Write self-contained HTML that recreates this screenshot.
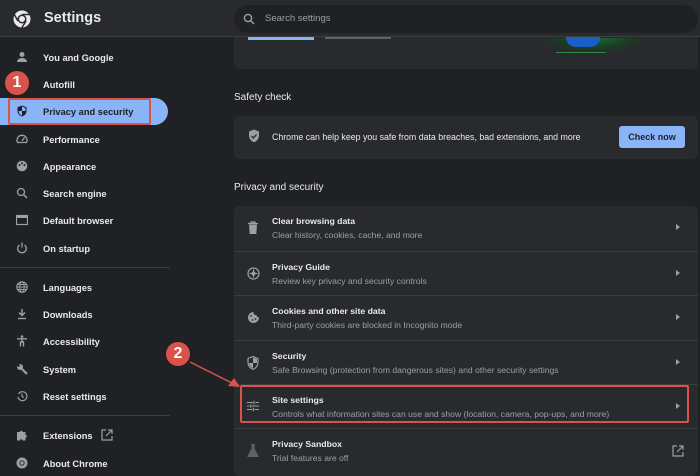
<!DOCTYPE html>
<html><head><style>
*{margin:0;padding:0;box-sizing:border-box}
body{width:700px;height:472px;overflow:hidden;background:#202124;font-family:"Liberation Sans",sans-serif;color:#e8eaed;position:relative}
.hdr{position:absolute;left:0;top:0;width:700px;height:37px;background:#292a2d;border-bottom:1px solid #3c3d40;z-index:5}
.title{position:absolute;left:44px;top:10px;font-size:14.5px;font-weight:bold;color:#e8eaed}
.search{position:absolute;left:234px;top:5px;width:464px;height:28px;border-radius:14px;background:#202124}
.search span{position:absolute;left:31px;top:8px;font-size:9.5px;color:#9aa0a6}
.nav{position:absolute;left:0;font-size:9.3px;font-weight:bold;color:#e8eaed}
.nav .ic{position:absolute;left:16px;top:-2px;width:12px;height:12px}
.nav .t{position:absolute;left:43px;top:0px;white-space:nowrap}
.sel{position:absolute;left:0;top:98px;width:168px;height:27px;background:#8ab4f8;border-radius:0 14px 14px 0}
.div{position:absolute;left:0;width:170px;height:1px;background:#3c3d40}
.card{position:absolute;left:234px;width:464px;background:#292a2d;border-radius:6px}
.h{position:absolute;left:234px;font-size:10px;color:#e8eaed}
.row{position:absolute;left:234px;width:464px;height:44px;border-top:1px solid #3c3d40}
.row .a{position:absolute;left:38px;top:10px;font-size:8.7px;font-weight:bold;color:#e8eaed}
.row .b{position:absolute;left:38px;top:24px;font-size:8.6px;color:#9aa0a6;white-space:nowrap}
.row .arr{position:absolute;left:442px;top:18px;width:0;height:0;border-left:4px solid #9aa0a6;border-top:3px solid transparent;border-bottom:3px solid transparent}
.row svg{position:absolute;left:13px;top:15px}
.badge{position:absolute;width:24px;height:24px;border-radius:50%;background:#d9534a;color:#fff;font-weight:bold;font-size:16px;text-align:center;line-height:24px;z-index:6}
</style></head><body>
<div class="hdr">
<svg style="position:absolute;left:12px;top:9px" width="20" height="20" viewBox="0 0 20 20"><circle cx="10" cy="10" r="8.5" fill="#e8eaed"/><circle cx="10" cy="10" r="4.5" fill="#292a2d"/><circle cx="10" cy="10" r="3" fill="#e8eaed"/><path d="M10 5.5H18M6 12L2 5M14 12L10 18.5" stroke="#292a2d" stroke-width="1.5"/></svg>
<div class="title">Settings</div>
<div class="search"><svg style="position:absolute;left:9px;top:8px" width="12" height="12" viewBox="0 0 12 12"><circle cx="5" cy="5" r="3.6" stroke="#9aa0a6" stroke-width="1.4" fill="none"/><path d="M7.6 7.6L11 11" stroke="#9aa0a6" stroke-width="1.5"/></svg><span>Search settings</span></div>
</div>
<div class="sel"></div>
<div style="position:absolute;left:8px;top:98px;width:143px;height:27px;border:2px solid #d9534a;border-radius:2px"></div>
<div class="nav" style="top:53px"><svg class="ic" viewBox="0 0 12 12"><circle cx="6" cy="3.5" r="2.5" fill="#9aa0a6"/><path d="M1 11c0-3 3-4 5-4s5 1 5 4z" fill="#9aa0a6"/></svg><span class="t">You and Google</span></div>
<div class="nav" style="top:80px"><span class="t">Autofill</span></div>
<div class="nav" style="top:107px;color:#202124"><svg class="ic" viewBox="0 0 12 12"><path d="M6 0.5L1.5 2.3v3.5c0 3 2 5 4.5 5.7 2.5-.7 4.5-2.7 4.5-5.7V2.3z" fill="#202124"/><path d="M6 1.5v4.5H2.6c.2 2.4 1.6 4 3.4 4.6V6h3.4V3z" fill="#8ab4f8"/></svg><span class="t">Privacy and security</span></div>
<div class="nav" style="top:135px"><svg class="ic" viewBox="0 0 12 12"><path d="M1.5 9.5a5 5 0 1 1 9 0z" stroke="#9aa0a6" stroke-width="1.3" fill="none"/><path d="M6 8L8.5 4.5" stroke="#9aa0a6" stroke-width="1.3"/></svg><span class="t">Performance</span></div>
<div class="nav" style="top:162px"><svg class="ic" viewBox="0 0 12 12"><circle cx="6" cy="6" r="5.3" fill="#9aa0a6"/><circle cx="3.5" cy="5" r="1" fill="#202124"/><circle cx="6" cy="3.3" r="1" fill="#202124"/><circle cx="8.5" cy="5" r="1" fill="#202124"/></svg><span class="t">Appearance</span></div>
<div class="nav" style="top:189px"><svg class="ic" viewBox="0 0 12 12"><circle cx="5" cy="5" r="3.5" stroke="#9aa0a6" stroke-width="1.3" fill="none"/><path d="M7.5 7.5L11 11" stroke="#9aa0a6" stroke-width="1.5"/></svg><span class="t">Search engine</span></div>
<div class="nav" style="top:216px"><svg class="ic" viewBox="0 0 12 12"><rect x="0.5" y="1.5" width="11" height="9" stroke="#9aa0a6" stroke-width="1.2" fill="none"/><rect x="0.5" y="1.5" width="11" height="2.5" fill="#9aa0a6"/></svg><span class="t">Default browser</span></div>
<div class="nav" style="top:244px"><svg class="ic" viewBox="0 0 12 12"><path d="M3.5 3a4.3 4.3 0 1 0 5 0" stroke="#9aa0a6" stroke-width="1.3" fill="none"/><path d="M6 0.5v5" stroke="#9aa0a6" stroke-width="1.3"/></svg><span class="t">On startup</span></div>
<div class="div" style="top:267px"></div>
<div class="nav" style="top:283px"><svg class="ic" viewBox="0 0 12 12"><circle cx="6" cy="6" r="5.2" stroke="#9aa0a6" stroke-width="1.1" fill="none"/><ellipse cx="6" cy="6" rx="2.2" ry="5.2" stroke="#9aa0a6" stroke-width="1" fill="none"/><path d="M1 6h10M1.7 3.5h8.6M1.7 8.5h8.6" stroke="#9aa0a6" stroke-width="0.9"/></svg><span class="t">Languages</span></div>
<div class="nav" style="top:310px"><svg class="ic" viewBox="0 0 12 12"><path d="M6 1v6M3 4.5L6 7.5 9 4.5" stroke="#9aa0a6" stroke-width="1.5" fill="none"/><path d="M2 10.5h8" stroke="#9aa0a6" stroke-width="1.4"/></svg><span class="t">Downloads</span></div>
<div class="nav" style="top:337px"><svg class="ic" viewBox="0 0 12 12"><circle cx="6" cy="1.6" r="1.3" fill="#9aa0a6"/><path d="M1 3.8h10M6 4v3.5M4.5 11.5V7h3v4.5" stroke="#9aa0a6" stroke-width="1.4" fill="none"/></svg><span class="t">Accessibility</span></div>
<div class="nav" style="top:365px"><svg class="ic" viewBox="0 0 12 12"><path d="M11 11L5.5 5.5" stroke="#9aa0a6" stroke-width="2.2"/><circle cx="4" cy="4" r="3" fill="#9aa0a6"/><circle cx="2.5" cy="2.5" r="1.3" fill="#202124"/></svg><span class="t">System</span></div>
<div class="nav" style="top:392px"><svg class="ic" viewBox="0 0 12 12"><path d="M2.5 4a4.5 4.5 0 1 1-.5 3" stroke="#9aa0a6" stroke-width="1.2" fill="none"/><path d="M6 3.5V6.5L8 7.5" stroke="#9aa0a6" stroke-width="1.1" fill="none"/></svg><span class="t">Reset settings</span></div>
<div class="div" style="top:415px"></div>
<div class="nav" style="top:431px"><svg class="ic" viewBox="0 0 12 12"><path d="M1 3h3a1.3 1.3 0 1 1 2.6 0H9.5v3a1.3 1.3 0 1 1 0 2.6V11.5H6.5a1.3 1.3 0 1 0-2.6 0H1z" fill="#9aa0a6"/></svg><span class="t">Extensions</span><svg style="position:absolute;left:101px;top:-2px" width="12" height="12" viewBox="0 0 12 12"><path d="M5 1H1v10h10V7M7 1h4v4M11 1L5 7" stroke="#9aa0a6" stroke-width="1.2" fill="none"/></svg></div>
<div class="nav" style="top:459px"><svg class="ic" viewBox="0 0 12 12"><circle cx="6" cy="6" r="5.5" fill="#9aa0a6"/><circle cx="6" cy="6" r="2.6" fill="#202124"/><circle cx="6" cy="6" r="1.7" fill="#9aa0a6"/></svg><span class="t">About Chrome</span></div>

<div class="card" style="top:20px;height:49px"></div>
<div style="position:absolute;left:248px;top:37px;width:66px;height:3px;background:#8ab4f8"></div>
<div style="position:absolute;left:325px;top:37px;width:66px;height:2px;background:#5f6368"></div>
<div style="position:absolute;left:540px;top:38px;width:110px;height:16px;background:radial-gradient(ellipse at 50% 0%,#1e6b36 0%,#1b3b25 45%,transparent 70%)"></div>
<div style="position:absolute;left:566px;top:37px;width:34px;height:10px;background:#1a5fc8;border-radius:0 0 17px 17px"></div>
<div style="position:absolute;left:556px;top:52px;width:50px;height:1px;background:#2d8b45"></div>

<div class="h" style="top:92px">Safety check</div>
<div class="card" style="top:116px;height:43px">
<svg style="position:absolute;left:14px;top:13px" width="12" height="14" viewBox="0 0 12 14"><path d="M6 0.5L1 2.5v4c0 3.2 2.2 5.8 5 6.8 2.8-1 5-3.6 5-6.8v-4z" fill="#9aa0a6"/><path d="M3.5 7l2 2 3-3.5" stroke="#292a2d" stroke-width="1.3" fill="none"/></svg>
<span style="position:absolute;left:38px;top:16px;font-size:8.8px;color:#e8eaed;white-space:nowrap">Chrome can help keep you safe from data breaches, bad extensions, and more</span>
<div style="position:absolute;left:385px;top:10px;width:66px;height:22px;background:#8ab4f8;border-radius:3px;color:#202124;font-size:9px;font-weight:bold;text-align:center;line-height:22px">Check now</div>
</div>

<div class="h" style="top:182px">Privacy and security</div>
<div class="card" style="top:206px;height:270px"></div>
<div class="row" style="top:206px;border-top:none"><svg width="12" height="14" viewBox="0 0 12 14"><path d="M1 2.5h10M4 2.5V1h4v1.5" stroke="#9aa0a6" stroke-width="1.2" fill="none"/><path d="M2 3.5h8l-.7 9.5H2.7z" fill="#9aa0a6"/></svg><div class="a">Clear browsing data</div><div class="b">Clear history, cookies, cache, and more</div><div class="arr"></div></div>
<div class="row" style="top:251px"><svg width="13" height="13" viewBox="0 0 13 13"><circle cx="6.5" cy="6.5" r="5.5" stroke="#9aa0a6" stroke-width="1.2" fill="none"/><path d="M6.5 2.5v8M2.5 6.5h8" stroke="#9aa0a6" stroke-width="1.1"/><circle cx="6.5" cy="6.5" r="2" fill="#9aa0a6"/></svg><div class="a">Privacy Guide</div><div class="b">Review key privacy and security controls</div><div class="arr"></div></div>
<div class="row" style="top:295px"><svg width="13" height="13" viewBox="0 0 13 13"><path d="M6.5 1a5.5 5.5 0 1 0 5.5 5.5 2.5 2.5 0 0 1-2.5-2.5A2.5 2.5 0 0 1 6.5 1z" fill="#9aa0a6"/><circle cx="4" cy="5" r="0.9" fill="#292a2d"/><circle cx="5.5" cy="9" r="0.9" fill="#292a2d"/><circle cx="8.5" cy="8" r="0.9" fill="#292a2d"/></svg><div class="a">Cookies and other site data</div><div class="b">Third-party cookies are blocked in Incognito mode</div><div class="arr"></div></div>
<div class="row" style="top:340px"><svg width="12" height="14" viewBox="0 0 12 14"><path d="M6 0.5L1 2.5v4c0 3.2 2.2 5.8 5 6.8 2.8-1 5-3.6 5-6.8v-4z" stroke="#9aa0a6" stroke-width="1.2" fill="none"/><path d="M6 1.5v5.5H2c.3 2.5 1.8 4.3 4 5.2V7h4V3.1z" fill="#9aa0a6"/></svg><div class="a">Security</div><div class="b">Safe Browsing (protection from dangerous sites) and other security settings</div><div class="arr"></div></div>
<div class="row" style="top:384px"><svg width="12" height="12" viewBox="0 0 12 12"><path d="M0 2.5h6M8.5 2.5H12M0 6h2.5M5 6h7M0 9.5h5M7.5 9.5H12M7 0.8v3.4M3.8 4.3v3.4M6.3 7.8v3.4" stroke="#9aa0a6" stroke-width="1.1"/></svg><div class="a">Site settings</div><div class="b">Controls what information sites can use and show (location, camera, pop-ups, and more)</div><div class="arr"></div></div>
<div class="row" style="top:428px"><svg width="12" height="13" viewBox="0 0 12 13"><path d="M4 0.5h4M5 0.5v4L1 12.5h10L7 4.5v-4" fill="#5f6368" stroke="#5f6368" stroke-width="1"/></svg><div class="a">Privacy Sandbox</div><div class="b">Trial features are off</div><svg style="left:438px;top:16px" width="12" height="12" viewBox="0 0 12 12"><path d="M5 1H1v10h10V7M7 1h4v4M11 1L5 7" stroke="#9aa0a6" stroke-width="1.2" fill="none"/></svg></div>

<div style="position:absolute;left:240px;top:385px;width:449px;height:38px;border:2px solid #d9534a;border-radius:2px"></div>
<div class="badge" style="left:5px;top:71px">1</div>
<div class="badge" style="left:166px;top:342px">2</div>
<svg style="position:absolute;left:0;top:0" width="700" height="472"><path d="M190 362L236 385" stroke="#d9534a" stroke-width="1.5"/><path d="M240 387L228 386L234 378z" fill="#d9534a"/></svg>
</body></html>
